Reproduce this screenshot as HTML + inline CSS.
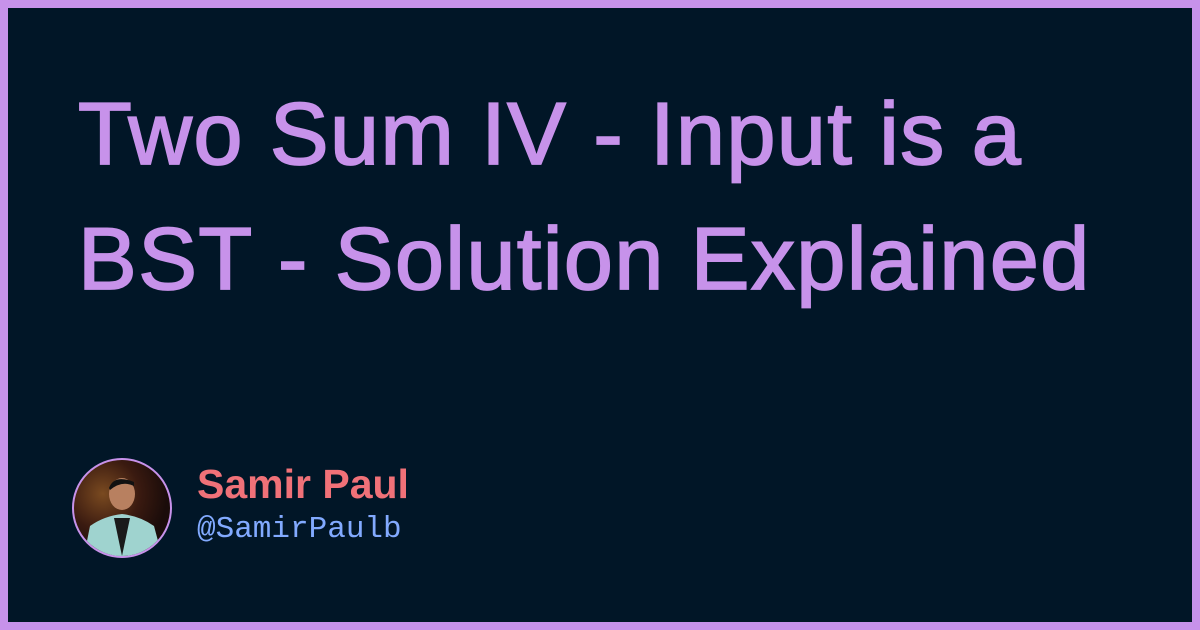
<!DOCTYPE html>
<html><head><style>
html,body{margin:0;padding:0}
body{width:1200px;height:630px;box-sizing:border-box;border:8px solid #c792ea;background:#011627;position:relative;overflow:hidden;font-family:"Liberation Sans",sans-serif}
.t{position:absolute;left:70px;top:63px;color:#c792ea;font-size:88px;line-height:125px;letter-spacing:1.5px;width:1090px;-webkit-text-stroke:1.8px #c792ea}
.av{position:absolute;left:64px;top:450px;width:96px;height:96px;border-radius:50%;border:2px solid #c792ea;overflow:hidden;background:radial-gradient(circle at 30% 35%,#7a4a20 0,#3a1a10 40%,#1a0c0a 70%)}
.n{position:absolute;left:189px;top:453px;color:#f07178;font-size:41px;font-weight:bold;letter-spacing:0}
.h{position:absolute;left:189px;top:504px;color:#82aaff;font-family:"Liberation Mono",monospace;font-size:31px}
</style></head><body>
<div class="t">Two Sum IV - Input is a BST - Solution Explained</div>
<div class="av"><svg width="96" height="96" viewBox="0 0 96 96">
<path d="M10 96 L16 66 Q30 56 48 54 Q66 56 80 66 L88 96Z" fill="#9fd3cf"/>
<path d="M40 58 L48 96 L56 58Z" fill="#1a1a1a"/>
<ellipse cx="48" cy="34" rx="13" ry="16" fill="#b88060"/>
<path d="M35 28 Q40 14 60 22 L60 26 Q48 20 36 30Z" fill="#111"/>
</svg></div>
<div class="n">Samir Paul</div>
<div class="h">@SamirPaulb</div>
</body></html>
